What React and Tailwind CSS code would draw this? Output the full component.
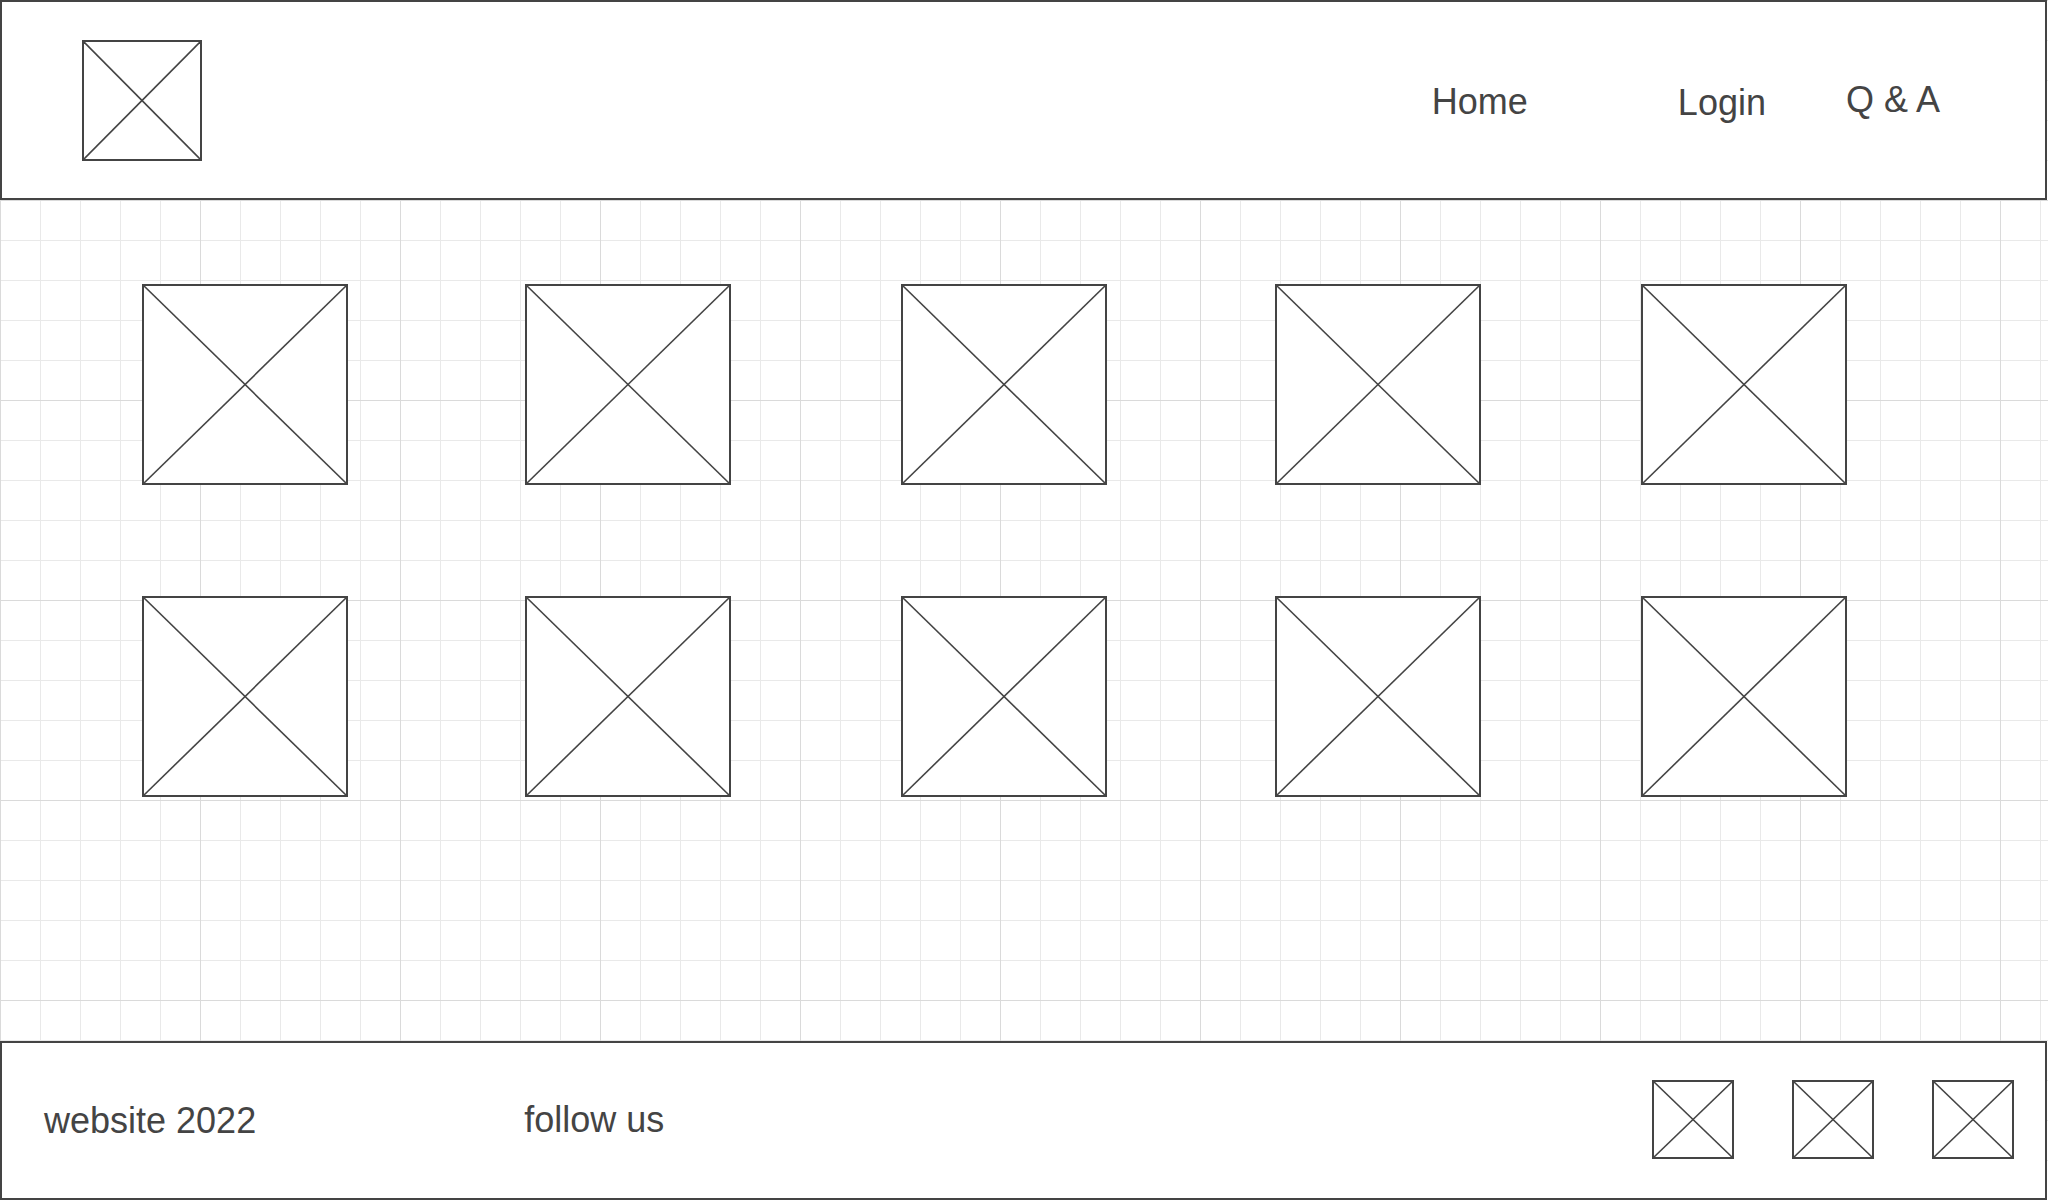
const rowOffsets = ["ml-[142px]", "ml-[177px]", "ml-[170px]", "ml-[168px]", "ml-[160px]"];

function Placeholder({ className = "" }) {
  return (
    <div className={`relative shrink-0 border-2 border-[#444] bg-white ${className}`}>
      <svg className="absolute inset-0 h-full w-full" preserveAspectRatio="none" viewBox="0 0 100 100">
        <line x1="0" y1="0" x2="100" y2="100" stroke="#444" strokeWidth="1.6" vectorEffect="non-scaling-stroke" />
        <line x1="100" y1="0" x2="0" y2="100" stroke="#444" strokeWidth="1.6" vectorEffect="non-scaling-stroke" />
      </svg>
    </div>
  );
}

function Header() {
  return (
    <header className="flex h-[200px] w-[2047px] shrink-0 items-start border-2 border-[#444] bg-white">
      <Placeholder className="ml-[80px] mt-[38px] h-[121px] w-[120px]" />
      <nav className="ml-auto mr-[105px] flex items-start text-[36px] leading-none">
        <span className="mt-[82px]">Home</span>
        <span className="ml-[150px] mt-[83px]">Login</span>
        <span className="ml-[80px] mt-[80px]">Q &amp; A</span>
      </nav>
    </header>
  );
}

function Gallery() {
  return (
    <main className="flex flex-1 flex-col gap-[111px] pt-[84px]">
      {[0, 1].map((row) => (
        <div className="flex" key={row}>
          {rowOffsets.map((offset) => (
            <Placeholder className={`${offset} h-[201px] w-[206px]`} key={offset} />
          ))}
        </div>
      ))}
    </main>
  );
}

function Footer() {
  return (
    <footer className="flex h-[159px] w-[2047px] shrink-0 items-start border-2 border-[#444] bg-white text-[36px] leading-none">
      <span className="ml-[42px] mt-[60px]">website 2022</span>
      <span className="ml-[268px] mt-[59px]">follow us</span>
      <div className="ml-auto mr-[31px] mt-[37px] flex gap-[58px]">
        <Placeholder className="h-[79px] w-[82px]" />
        <Placeholder className="h-[79px] w-[82px]" />
        <Placeholder className="h-[79px] w-[82px]" />
      </div>
    </footer>
  );
}

export default function App() {
  return (
    <div className="flex h-[1200px] w-[2048px] flex-col overflow-hidden bg-white bg-[linear-gradient(to_right,#dadada_1px,transparent_1px),linear-gradient(to_bottom,#dadada_1px,transparent_1px),linear-gradient(to_right,#e9e9e9_1px,transparent_1px),linear-gradient(to_bottom,#e9e9e9_1px,transparent_1px)] bg-[size:200px_200px,200px_200px,40px_40px,40px_40px] font-['Liberation_Sans',Arial,sans-serif] text-[#444]">
      <Header />
      <Gallery />
      <Footer />
    </div>
  );
}
